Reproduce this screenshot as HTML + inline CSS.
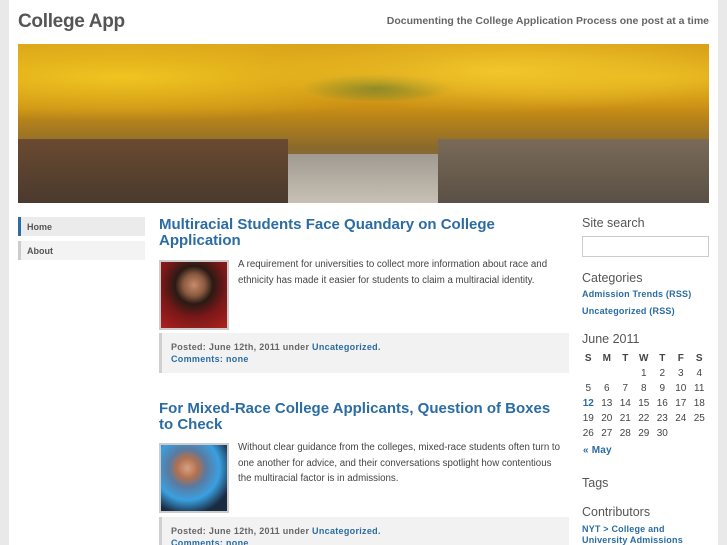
<!DOCTYPE html><html style="overflow:hidden;height:545px"><head><style>
*{margin:0;padding:0;box-sizing:border-box}
body{width:727px;height:545px;overflow:hidden;background:#e9e9e9;font-family:"Liberation Sans",sans-serif;position:relative}
#w{position:absolute;left:9px;top:0;width:709px;height:545px;background:#fff}
.a{position:absolute}
.t{color:#2b6ca3;font-weight:bold;font-size:15px;line-height:16px;white-space:nowrap}
.p{font-size:9.7px;line-height:15.5px;color:#444}
.m{background:#f2f2f2;border-left:3px solid #d0d0d0;font-size:9px;font-weight:bold;color:#666;padding:8px 0 0 9px;line-height:12px;letter-spacing:.3px}
.m b{color:#2b6ca3}
.h{font-size:12.5px;color:#555}
.l{font-size:9px;font-weight:bold;color:#2b6ca3;letter-spacing:.2px}
table{border-collapse:collapse;font-size:10px;color:#444}
td,th{width:18.5px;height:15px;text-align:center;padding:0}
</style></head><body>
<div id="w"></div>
<div class="a" style="left:18px;top:11px;font-size:19px;font-weight:bold;color:#555;letter-spacing:-.3px">College App</div>
<div class="a" style="right:18px;top:15px;font-size:10.5px;font-weight:bold;color:#666">Documenting the College Application Process one post at a time</div>
<div class="a" style="left:18px;top:44px;width:691px;height:159px;overflow:hidden;background:linear-gradient(180deg,#d9a21a 0%,#c98e14 40%,#8a6a2a 65%,#7a6a55 80%,#9a9085 100%)">
<div class="a" style="left:0;top:0;width:691px;height:110px;background:radial-gradient(ellipse at 15% 30%,#f0c420 0,transparent 40%),radial-gradient(ellipse at 70% 25%,#f2c62a 0,transparent 35%),radial-gradient(ellipse at 92% 30%,#e8b820 0,transparent 30%),radial-gradient(ellipse at 52% 40%,#3a5a2a 0,transparent 15%)"></div>
<div class="a" style="left:270px;top:110px;width:150px;height:49px;background:linear-gradient(180deg,#a09a90,#c8c0b5)"></div>
<div class="a" style="left:0;top:95px;width:270px;height:64px;background:linear-gradient(180deg,#6a4a30,#4a3a2e)"></div>
<div class="a" style="left:420px;top:95px;width:271px;height:64px;background:linear-gradient(180deg,#7a6a58,#5a5045)"></div>
</div>
<div class="a" style="left:18px;top:217px;width:127px;height:19px;background:#ebebeb;border-left:3px solid #2b6ca3;font-size:9px;font-weight:bold;color:#555;padding:5px 0 0 6px">Home</div>
<div class="a" style="left:18px;top:241px;width:127px;height:19px;background:#f3f3f3;border-left:3px solid #ccc;font-size:9px;font-weight:bold;color:#555;padding:5px 0 0 6px">About</div>

<div class="a t" style="left:159px;top:217px">Multiracial Students Face Quandary on College<br>Application</div>
<div class="a" style="left:159px;top:260px;width:70px;height:70px;border:2px solid #ccc;background:radial-gradient(circle at 50% 35%,#c98a6a 0,#8a5a40 20%,#2a1a14 35%,#7a1818 60%,#b02020 100%)"></div>
<div class="a p" style="left:238px;top:257px;width:335px">A requirement for universities to collect more information about race and ethnicity has made it easier for students to claim a multiracial identity.</div>
<div class="a m" style="left:159px;top:333px;width:410px;height:40px">Posted: June 12th, 2011 under <b>Uncategorized</b>.<br><b>Comments: none</b></div>

<div class="a t" style="left:159px;top:401px">For Mixed-Race College Applicants, Question of Boxes<br>to Check</div>
<div class="a" style="left:159px;top:443px;width:70px;height:70px;border:2px solid #ccc;background:radial-gradient(circle at 40% 35%,#d8a080 0,#b07050 18%,#5a7aa0 32%,#3aa0e0 55%,#1a2a40 80%)"></div>
<div class="a p" style="left:238px;top:440px;width:328px">Without clear guidance from the colleges, mixed-race students often turn to one another for advice, and their conversations spotlight how contentious the multiracial factor is in admissions.</div>
<div class="a m" style="left:159px;top:517px;width:410px;height:28px">Posted: June 12th, 2011 under <b>Uncategorized</b>.<br><b>Comments: none</b></div>

<div class="a h" style="left:582px;top:216px">Site search</div>
<div class="a" style="left:582px;top:236px;width:127px;height:21px;border:1px solid #ccc"></div>
<div class="a h" style="left:582px;top:271px">Categories</div>
<div class="a l" style="left:582px;top:289px">Admission Trends (RSS)</div>
<div class="a l" style="left:582px;top:306px">Uncategorized (RSS)</div>
<div class="a h" style="left:582px;top:332px">June 2011</div>
<table class="a" style="left:579px;top:351px">
<tr><th>S</th><th>M</th><th>T</th><th>W</th><th>T</th><th>F</th><th>S</th></tr>
<tr><td></td><td></td><td></td><td>1</td><td>2</td><td>3</td><td>4</td></tr>
<tr><td>5</td><td>6</td><td>7</td><td>8</td><td>9</td><td>10</td><td>11</td></tr>
<tr><td style="color:#2b6ca3;font-weight:bold">12</td><td>13</td><td>14</td><td>15</td><td>16</td><td>17</td><td>18</td></tr>
<tr><td>19</td><td>20</td><td>21</td><td>22</td><td>23</td><td>24</td><td>25</td></tr>
<tr><td>26</td><td>27</td><td>28</td><td>29</td><td>30</td><td></td><td></td></tr>
</table>
<div class="a l" style="left:583px;top:445px;font-size:10px">« May</div>
<div class="a h" style="left:582px;top:476px">Tags</div>
<div class="a h" style="left:582px;top:505px">Contributors</div>
<div class="a l" style="left:582px;top:524px;line-height:11px">NYT &gt; College and<br>University Admissions</div>
</body></html>
